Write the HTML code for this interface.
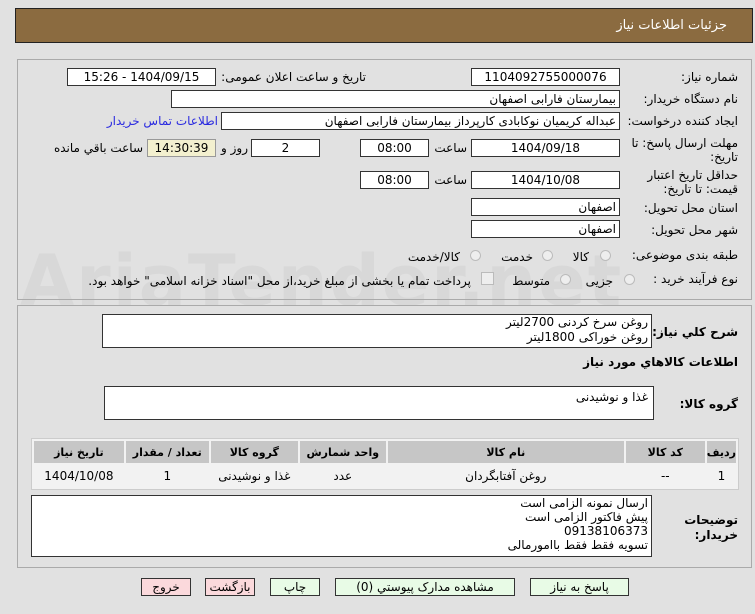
<!DOCTYPE html>
<html><head><meta charset="utf-8"><style>
body{margin:0;width:755px;height:614px;background:#e1e1e1;font-family:"DejaVu Sans","Liberation Sans",sans-serif;font-size:12px;color:#000;position:relative;overflow:hidden}
.a{position:absolute;white-space:nowrap}
.l{position:absolute;white-space:nowrap;text-align:right;direction:rtl}
.in{position:absolute;background:#fff;border:1px solid #333;box-sizing:border-box;height:18px;line-height:16px;text-align:center;direction:rtl}
.inr{text-align:right;padding-right:3px}
.panel{position:absolute;border:1px solid #aaa;box-sizing:border-box}
.rad{position:absolute;width:11px;height:11px;border-radius:50%;border:1px solid #bbb;background:#eee;box-sizing:border-box}
.btn{position:absolute;height:18px;line-height:16px;border:1px solid #333;box-sizing:border-box;text-align:center;background:#e8fbe6}
.pink{background:#fbd9dc}
table{position:absolute;border-collapse:separate;border-spacing:2px;background:#f2f2f2;border:1px solid #ccc;direction:rtl}
td,th{text-align:center;height:22px;padding:0;direction:rtl}
th{background:#c6c6c6;font-weight:bold;font-size:11px}
td{background:#f2f2f2}
</style></head><body>
<div class="a" style="left:15px;top:8px;width:738px;height:35px;background:#8b6b40;border:1px solid #222;box-sizing:border-box"></div>
<div class="l" style="right:28px;top:18px;color:#fff;font-size:13px">جزئیات اطلاعات نیاز</div>
<div class="a" style="left:20px;top:240px;font-size:70px;font-weight:bold;color:rgba(190,190,190,0.25);letter-spacing:2px">AriaTender.net</div>

<div class="panel" style="left:17px;top:59px;width:735px;height:241px"></div>
<div class="l" style="right:17px;top:70px">شماره نیاز:</div>
<div class="in" style="left:471px;top:68px;width:149px">1104092755000076</div>
<div class="l" style="right:389px;top:70px">تاریخ و ساعت اعلان عمومی:</div>
<div class="in" style="left:67px;top:68px;width:149px">1404/09/15 - 15:26</div>
<div class="l" style="right:17px;top:92px">نام دستگاه خریدار:</div>
<div class="in inr" style="left:171px;top:90px;width:449px">بیمارستان فارابی اصفهان</div>
<div class="l" style="right:17px;top:114px">ایجاد کننده درخواست:</div>
<div class="in inr" style="left:221px;top:112px;width:399px">عبداله کریمیان نوکابادی کارپرداز بیمارستان فارابی اصفهان</div>
<div class="l" style="right:537px;top:114px;color:#2a2ae0">اطلاعات تماس خریدار</div>
<div class="l" style="right:17px;top:136px">مهلت ارسال پاسخ: تا</div>
<div class="l" style="right:17px;top:150px">تاریخ:</div>
<div class="in" style="left:471px;top:139px;width:149px">1404/09/18</div>
<div class="l" style="right:288px;top:141px">ساعت</div>
<div class="in" style="left:360px;top:139px;width:69px">08:00</div>
<div class="in" style="left:251px;top:139px;width:69px">2</div>
<div class="l" style="right:507px;top:141px">روز و</div>
<div class="in" style="left:147px;top:139px;width:69px;background:#f3f0cf;border-color:#999">14:30:39</div>
<div class="l" style="right:612px;top:141px">ساعت باقي مانده</div>
<div class="l" style="right:17px;top:168px">حداقل تاریخ اعتبار</div>
<div class="l" style="right:17px;top:182px">قیمت: تا تاریخ:</div>
<div class="in" style="left:471px;top:171px;width:149px">1404/10/08</div>
<div class="l" style="right:288px;top:173px">ساعت</div>
<div class="in" style="left:360px;top:171px;width:69px">08:00</div>
<div class="l" style="right:17px;top:201px">استان محل تحویل:</div>
<div class="in inr" style="left:471px;top:198px;width:149px">اصفهان</div>
<div class="l" style="right:17px;top:223px">شهر محل تحویل:</div>
<div class="in inr" style="left:471px;top:220px;width:149px">اصفهان</div>
<div class="l" style="right:17px;top:248px">طبقه بندی موضوعی:</div>
<div class="rad" style="left:600px;top:250px"></div><div class="l" style="right:166px;top:250px">کالا</div>
<div class="rad" style="left:542px;top:250px"></div><div class="l" style="right:222px;top:250px">خدمت</div>
<div class="rad" style="left:470px;top:250px"></div><div class="l" style="right:295px;top:250px">کالا/خدمت</div>
<div class="l" style="right:17px;top:272px">نوع فرآیند خرید :</div>
<div class="rad" style="left:624px;top:274px"></div><div class="l" style="right:142px;top:274px">جزیی</div>
<div class="rad" style="left:560px;top:274px"></div><div class="l" style="right:205px;top:274px">متوسط</div>
<div class="a" style="left:481px;top:272px;width:11px;height:11px;border:1px solid #bbb;background:#eee"></div>
<div class="l" style="right:284px;top:274px">پرداخت تمام یا بخشی از مبلغ خرید،از محل "اسناد خزانه اسلامی" خواهد بود.</div>

<div class="panel" style="left:17px;top:305px;width:735px;height:263px"></div>
<div class="l" style="right:17px;top:325px;font-weight:bold">شرح کلي نیاز:</div>
<div class="in" style="left:102px;top:314px;width:550px;height:34px;text-align:right;padding-right:3px;line-height:15px">روغن سرخ کردنی 2700لیتر<br>روغن خوراکی 1800لیتر</div>
<div class="l" style="right:17px;top:355px;font-weight:bold">اطلاعات کالاهاي مورد نیاز</div>
<div class="l" style="right:17px;top:397px;font-weight:bold">گروه کالا:</div>
<div class="in" style="left:104px;top:386px;width:550px;height:34px;text-align:right;padding:2px 5px 0 0">غذا و نوشیدنی</div>
<table dir="rtl" style="left:31px;top:438px;width:708px">
<tr><th style="width:27px">ردیف</th><th style="width:79px">کد کالا</th><th style="width:236px">نام کالا</th><th style="width:86px">واحد شمارش</th><th style="width:87px">گروه کالا</th><th style="width:83px">تعداد / مقدار</th><th>تاریخ نیاز</th></tr>
<tr><td>1</td><td>--</td><td>روغن آفتابگردان</td><td>عدد</td><td>غذا و نوشیدنی</td><td>1</td><td>1404/10/08</td></tr>
</table>
<div class="l" style="right:17px;top:513px;font-weight:bold">توضیحات</div>
<div class="l" style="right:17px;top:528px;font-weight:bold">خریدار:</div>
<div class="in" style="left:31px;top:495px;width:621px;height:62px;text-align:right;padding-right:3px;line-height:14px">ارسال نمونه الزامی است<br>پیش فاکتور الزامی است<br>09138106373<br>تسویه فقط فقط باامورمالی</div>
<div class="btn" style="left:530px;top:578px;width:99px">پاسخ به نیاز</div>
<div class="btn" style="left:335px;top:578px;width:180px">مشاهده مدارک پیوستي (0)</div>
<div class="btn" style="left:270px;top:578px;width:50px">چاپ</div>
<div class="btn pink" style="left:205px;top:578px;width:50px">بازگشت</div>
<div class="btn pink" style="left:141px;top:578px;width:50px">خروج</div>
</body></html>
